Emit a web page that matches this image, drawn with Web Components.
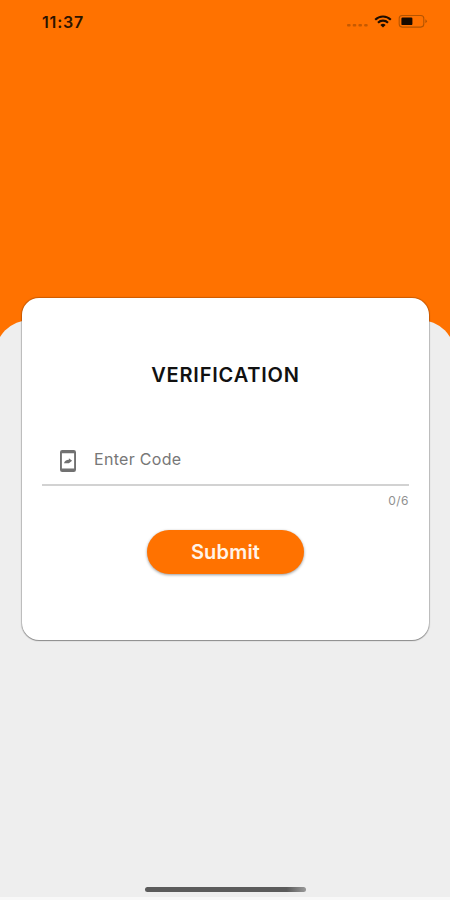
<!DOCTYPE html>
<html lang="en">
<head>
<meta charset="UTF-8">
<meta name="viewport" content="width=device-width, initial-scale=1.0">
<title>Verification</title>
<style>
    :root {
        --accent-color: #ff7200;
        --sheet-color: #eeeeee;
    }

    body {
        margin: 0;
        font-family: Inter, "Liberation Sans", sans-serif;
    }
</style>
</head>
<body>
<v-screen>
    <v-status-bar slot="status" time="11:37"></v-status-bar>
    <v-card heading="VERIFICATION">
        <v-code-field label="Enter Code" max="6"></v-code-field>
        <v-button>Submit</v-button>
    </v-card>
</v-screen>

<script>
class VScreen extends HTMLElement {
    constructor() {
        super();
        this.shadow = this.attachShadow({mode: 'open'});
    }

    connectedCallback() {
        this.shadow.innerHTML = `
            <style>
                :host {
                    display: grid;
                    grid-template: 900px / 450px;
                    overflow: hidden;
                    background: var(--accent-color);
                }

                .backdrop, .content {
                    grid-area: 1 / 1;
                }

                .backdrop {
                    box-sizing: border-box;
                    margin: 320px -5px 0;
                    border-radius: 35px 35px 0 0;
                    background: var(--sheet-color);
                    border-bottom: 3px solid #f8f8f8;
                }

                .content {
                    display: flex;
                    flex-direction: column;
                    align-items: center;
                    box-sizing: border-box;
                    padding-bottom: 8px;
                    z-index: 1;
                }

                .status {
                    width: 100%;
                    height: 298px;
                }

                .home {
                    width: 161px;
                    height: 5px;
                    margin-top: auto;
                    border-radius: 3px;
                    background: linear-gradient(90deg, #5b5b5b 88%, #999);
                }
            </style>

            <div class="backdrop"></div>
            <div class="content">
                <div class="status"><slot name="status"></slot></div>
                <slot></slot>
                <div class="home"></div>
            </div>
        `;
    }
}

class VStatusBar extends HTMLElement {
    constructor() {
        super();
        this.shadow = this.attachShadow({mode: 'open'});
    }

    connectedCallback() {
        this.shadow.innerHTML = `
            <style>
                :host {
                    display: flex;
                    align-items: center;
                    justify-content: space-between;
                    height: 43px;
                    padding: 0 22px 0 42px;
                    color: #2b1400;
                }

                .time {
                    font-size: 16px;
                    font-weight: 600;
                    letter-spacing: .8px;
                }

                .icons {
                    display: flex;
                    align-items: center;
                }

                svg {
                    display: block;
                }
            </style>

            <span class="time">${this.getAttribute('time')}</span>
            <div class="icons">
                <!-- no signal, wifi, battery -->
                <svg width="82" height="16" viewBox="0 0 82 16">
                    <g fill="#b35200" fill-opacity=".75">
                        <rect x="1" y="10" width="3.6" height="2.6" rx="1"/>
                        <rect x="6.7" y="10" width="3.6" height="2.6" rx="1"/>
                        <rect x="12.4" y="10" width="3.6" height="2.6" rx="1"/>
                        <rect x="18.1" y="10" width="3.6" height="2.6" rx="1"/>
                    </g>
                    <g fill="none" stroke="#1c0d00" stroke-width="2.1">
                        <path d="M29.2 5.7a11 11 0 0 1 15.6 0"/>
                        <path d="M32 8.7a7 7 0 0 1 10 0"/>
                    </g>
                    <path d="M34.4 11a3.7 3.7 0 0 1 5.2 0L37 13.6z" fill="#1c0d00"/>
                    <rect x="53.2" y="1.5" width="24.6" height="11.6" rx="3" fill="none" stroke="#b45400" stroke-width="1.1"/>
                    <rect x="55.4" y="3.5" width="11" height="7.6" rx="1.2" fill="#170a00"/>
                    <path d="M79.4 5.2q3 2 0 4z" fill="#b45400"/>
                </svg>
            </div>
        `;
    }
}

class VCard extends HTMLElement {
    constructor() {
        super();
        this.shadow = this.attachShadow({mode: 'open'});
    }

    connectedCallback() {
        this.shadow.innerHTML = `
            <style>
                :host {
                    display: flex;
                    flex-direction: column;
                    align-items: center;
                    box-sizing: border-box;
                    width: 407px;
                    height: 342px;
                    margin-left: 1px;
                    padding: 64px 20px 0;
                    border-radius: 17px;
                    background: #fff;
                    box-shadow: 0 0 1px 1px rgba(0, 0, 0, .2), 0 1px 1px rgba(0, 0, 0, .28);
                }

                h1 {
                    margin: 0 0 58px;
                    font-size: 20px;
                    font-weight: 600;
                    line-height: 26px;
                    letter-spacing: .8px;
                    color: #111;
                }
            </style>

            <h1>${this.getAttribute('heading')}</h1>
            <slot></slot>
        `;
    }
}

class VCodeField extends HTMLElement {
    constructor() {
        super();
        this.shadow = this.attachShadow({mode: 'open'});
    }

    connectedCallback() {
        this.shadow.innerHTML = `
            <style>
                :host {
                    display: block;
                    width: 100%;
                }

                .row {
                    display: flex;
                    align-items: flex-start;
                    box-sizing: border-box;
                    height: 40px;
                    padding-left: 17px;
                    border-bottom: 2px solid #d2d2d2;
                }

                svg {
                    margin-top: 3px;
                }

                .label {
                    margin-left: 17px;
                    font-size: 16px;
                    line-height: 26px;
                    letter-spacing: .3px;
                    color: #777;
                }

                .counter {
                    padding-top: 6px;
                    font-size: 12px;
                    line-height: 18px;
                    letter-spacing: .5px;
                    text-align: right;
                    color: #909090;
                }
            </style>

            <div class="row">
                <svg width="18" height="24" viewBox="0 0 18 24">
                    <path fill="#717171" fill-rule="evenodd" d="M3.2 1h11.6Q17 1 17 3.2v17.6q0 2.2-2.2 2.2H3.2Q1 23 1 20.8V3.2Q1 1 3.2 1zM2.9 4.2v15.4h12.2V4.2z"/>
                    <path fill="#717171" d="M5 14.2q.8-3.3 4.9-3.4V9.2l3.2 2.5-3.2 2.5z"/>
                </svg>
                <span class="label">${this.getAttribute('label')}</span>
            </div>
            <div class="counter">0/${this.getAttribute('max')}</div>
        `;
    }
}

class VButton extends HTMLElement {
    constructor() {
        super();
        this.shadow = this.attachShadow({mode: 'open'});
    }

    connectedCallback() {
        this.shadow.innerHTML = `
            <style>
                :host {
                    display: block;
                    margin-top: 20px;
                }

                button {
                    display: block;
                    width: 157px;
                    height: 44px;
                    padding: 0;
                    border: 0;
                    border-radius: 22px;
                    background: var(--accent-color);
                    box-shadow: 0 1px 3px rgba(0, 0, 0, .4);
                    font: 600 20px/44px Inter, "Liberation Sans", sans-serif;
                    letter-spacing: .2px;
                    color: #fff3e8;
                }
            </style>

            <button type="button"><slot></slot></button>
        `;
    }
}

customElements.define('v-screen', VScreen);
customElements.define('v-status-bar', VStatusBar);
customElements.define('v-card', VCard);
customElements.define('v-code-field', VCodeField);
customElements.define('v-button', VButton);
</script>
</body>
</html>
